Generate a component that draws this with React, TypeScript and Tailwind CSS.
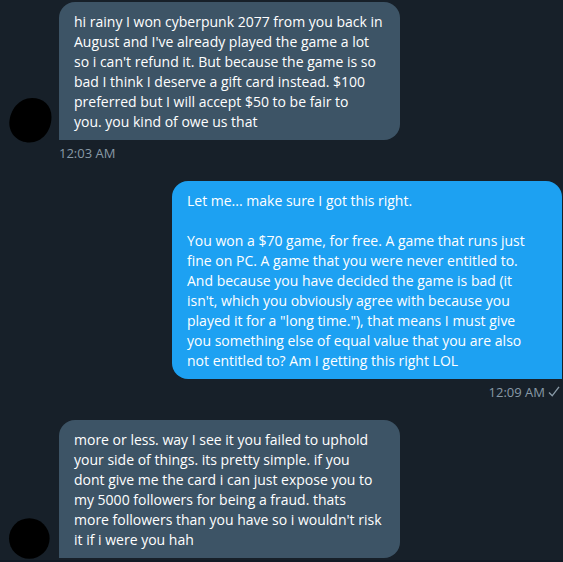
type Message = {
  id: number;
  mine: boolean;
  text: string;
  time?: string;
};

const messages: Message[] = [
  {
    id: 1,
    mine: false,
    text: `hi rainy I won cyberpunk 2077 from you back in
August and I've already played the game a lot
so i can't refund it. But because the game is so
bad I think I deserve a gift card instead. $100
preferred but I will accept $50 to be fair to
you. you kind of owe us that`,
    time: "12:03 AM",
  },
  {
    id: 2,
    mine: true,
    text: `Let me... make sure I got this right.

You won a $70 game, for free. A game that runs just
fine on PC. A game that you were never entitled to.
And because you have decided the game is bad (it
isn't, which you obviously agree with because you
played it for a "long time."), that means I must give
you something else of equal value that you are also
not entitled to? Am I getting this right LOL`,
    time: "12:09 AM",
  },
  {
    id: 3,
    mine: false,
    text: `more or less. way I see it you failed to uphold
your side of things. its pretty simple. if you
dont give me the card i can just expose you to
my 5000 followers for being a fraud. thats
more followers than you have so i wouldn't risk
it if i were you hah`,
  },
];

function SentCheck() {
  return (
    <svg
      width="12"
      height="12"
      viewBox="0 0 12 12"
      fill="none"
      stroke="currentColor"
      strokeWidth="1.4"
      role="img"
      aria-label="Sent"
    >
      <path d="M1 6.6 4.2 9.8 11 0.8" />
    </svg>
  );
}

function Avatar({ wide }: { wide: boolean }) {
  return (
    <svg
      width="42"
      height="44"
      viewBox="0 0 42 44"
      className="shrink-0 overflow-visible"
    >
      {wide ? (
        <path d="M23 0C34 0 42.500 7 42.500 19C42.500 33 33 44.500 20.500 44.500C9 44.500 0 36 0.300 24.500C1 12 10 0 23 0Z" />
      ) : (
        <circle cx="20.300" cy="22.500" r="20.300" />
      )}
    </svg>
  );
}

function Received({ message }: { message: Message }) {
  return (
    <div>
      <div className="flex items-end gap-2">
        <div className="-mb-[2px]">
          <Avatar wide={message.id === 1} />
        </div>
        <p className="w-[341px] rounded-2xl rounded-bl-none bg-[#3d5466] px-[15px] pt-[10px] pb-[8px] text-[14px] leading-[20px] whitespace-pre text-white">
          {message.text}
        </p>
      </div>
      {message.time && (
        <time className="mt-1 ml-[50px] block text-[13px] leading-[18px] text-[#8899a6]">
          {message.time}
        </time>
      )}
    </div>
  );
}

function Sent({ message }: { message: Message }) {
  return (
    <div className="flex flex-col items-end">
      <p className="w-[390px] rounded-2xl rounded-br-none bg-[#1da1f2] px-[15px] pt-[10px] pb-[8px] text-[14px] leading-[20px] whitespace-pre text-white">
        {message.text}
      </p>
      <div className="mt-1 flex items-center gap-[3px] pr-0.5 text-[13px] leading-[18px] text-[#8899a6]">
        <time>{message.time}</time>
        <SentCheck />
      </div>
    </div>
  );
}

export default function App() {
  return (
    <main className="flex min-h-screen flex-col gap-[19px] border-b-2 border-[#121a25] bg-[#172029] pt-0.5 pr-px pl-[9px] font-['Open_Sans','Noto_Sans',sans-serif]">
      {messages.map((message) =>
        message.mine ? (
          <Sent key={message.id} message={message} />
        ) : (
          <Received key={message.id} message={message} />
        )
      )}
    </main>
  );
}
